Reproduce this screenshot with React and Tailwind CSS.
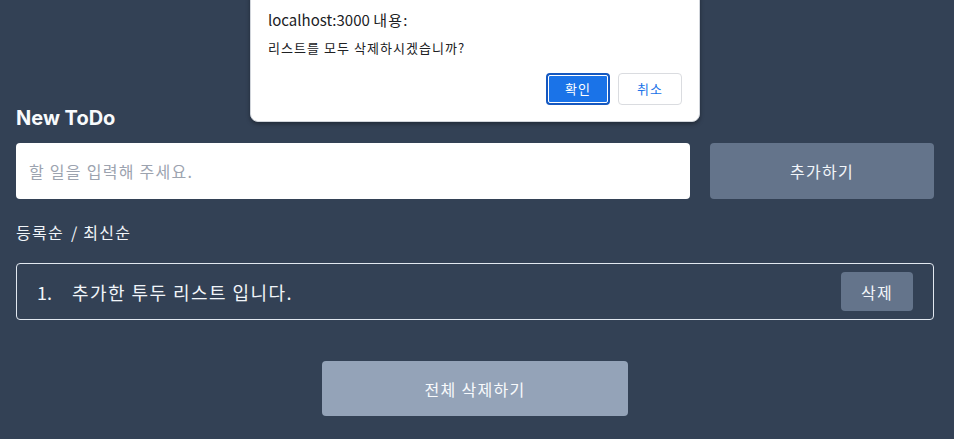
export default function App() {
  const font = { fontFamily: '"Noto Sans CJK KR", "Noto Sans", sans-serif' };
  return (
    <div
      className="relative min-h-screen w-full bg-[#334155] pl-4 pr-5 pt-[104px] font-['Inter','Noto_Sans_CJK_KR',sans-serif] text-white"
    >
      <h2 className="text-xl font-bold leading-7 text-[#f8fafc]">New ToDo</h2>
      <div className="mt-[11px] flex gap-5">
        <input
          className="h-14 flex-1 rounded-[4px] bg-white px-[13px] text-base tracking-[0.08em] text-gray-800 outline-none placeholder:text-[#9ca3af] font-['Noto_Sans_CJK_KR',sans-serif]"
          placeholder="할 일을 입력해 주세요."
        />
        <button className="h-14 w-[224px] rounded-[4px] bg-[#64748b] text-base tracking-[0.08em] text-[#f1f5f9] font-['Noto_Sans_CJK_KR',sans-serif]">
          추가하기
        </button>
      </div>
      <div className="mt-[21px] text-base leading-6 tracking-[0.08em] text-[#f1f5f9] font-['Noto_Sans_CJK_KR',sans-serif]">
        등록순 <span className="ml-0.5">/</span> 최신순
      </div>
      <ul className="mt-[19px]">
        <li className="flex h-[57px] items-center rounded-[4px] border border-[#e2e8f0] pl-5 pr-5 font-['Noto_Sans_CJK_KR',sans-serif]">
          <span className="w-[35px] text-lg text-[#f1f5f9]">1.</span>
          <span className="flex-1 text-lg tracking-[0.08em] text-[#f1f5f9]">추가한 투두 리스트 입니다.</span>
          <button className="h-[39px] w-[72px] rounded-[4px] bg-[#64748b] text-base tracking-[0.08em] text-[#f1f5f9]">
            삭제
          </button>
        </li>
      </ul>
      <div className="mt-[41px] flex justify-center">
        <button className="h-[55px] w-[306px] rounded-[4px] bg-[#94a3b8] text-base tracking-[0.08em] text-[#f8fafc] font-['Noto_Sans_CJK_KR',sans-serif]">
          전체 삭제하기
        </button>
      </div>

      <div
        style={font}
        className="absolute left-[250px] top-[-10px] w-[450px] rounded-lg border border-[#d1d5db] bg-white px-[17px] pb-[16px] pt-[19px] shadow-[0_2px_4px_rgba(0,0,0,0.35)]"
      >
        <div className="text-[15px] leading-5 text-[#202124]">
          localhost:3000 <span className="tracking-[0.08em]">내용:</span>
        </div>
        <div className="mt-[9px] text-[13px] leading-[18px] tracking-[0.08em] text-[#202124]">
          리스트를 모두 삭제하시겠습니까?
        </div>
        <div className="mt-4 flex justify-end gap-2 pr-0">
          <button className="h-8 w-16 rounded-[4px] border-2 border-[#1558c0] bg-[#1a73e8] text-[13px] tracking-[0.08em] text-white outline outline-1 outline-white -outline-offset-[3px]">
            확인
          </button>
          <button className="h-8 w-16 rounded-[4px] border border-[#dadce0] bg-white text-[13px] tracking-[0.08em] text-[#1a73e8]">
            취소
          </button>
        </div>
      </div>
    </div>
  );
}
